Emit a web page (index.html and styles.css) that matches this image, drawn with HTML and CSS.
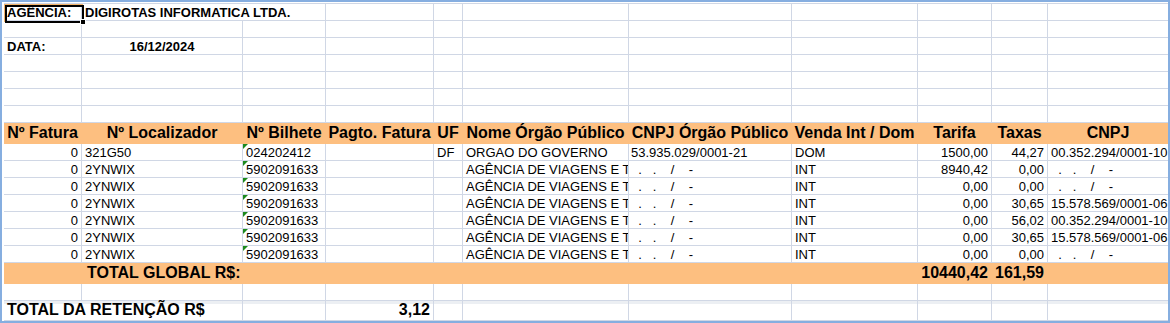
FILE: index.html
```html
<!DOCTYPE html>
<html lang="pt-BR">
<head>
    <meta charset="UTF-8">
    <title>Relatório de Retenção</title>
    <link rel="stylesheet" href="styles.css">
</head>
<body>
<div class="sheet">
    <div class="grid">
        <!-- cabeçalho da agência -->
        <div class="row">
            <div class="cell b pl">AGÊNCIA:</div>
            <div class="cell b span2">DIGIROTAS INFORMATICA LTDA.</div>
            <div class="cell"></div><div class="cell"></div><div class="cell"></div><div class="cell"></div>
            <div class="cell"></div><div class="cell"></div><div class="cell"></div><div class="cell"></div>
        </div>
        <div class="row">
            <div class="cell"></div><div class="cell"></div><div class="cell"></div><div class="cell"></div>
            <div class="cell"></div><div class="cell"></div><div class="cell"></div><div class="cell"></div>
            <div class="cell"></div><div class="cell"></div><div class="cell"></div>
        </div>
        <div class="row">
            <div class="cell b pl">DATA:</div>
            <div class="cell b ctr">16/12/2024</div>
            <div class="cell"></div><div class="cell"></div><div class="cell"></div><div class="cell"></div>
            <div class="cell"></div><div class="cell"></div><div class="cell"></div><div class="cell"></div>
            <div class="cell"></div>
        </div>
        <div class="row">
            <div class="cell"></div><div class="cell"></div><div class="cell"></div><div class="cell"></div>
            <div class="cell"></div><div class="cell"></div><div class="cell"></div><div class="cell"></div>
            <div class="cell"></div><div class="cell"></div><div class="cell"></div>
        </div>
        <div class="row">
            <div class="cell"></div><div class="cell"></div><div class="cell"></div><div class="cell"></div>
            <div class="cell"></div><div class="cell"></div><div class="cell"></div><div class="cell"></div>
            <div class="cell"></div><div class="cell"></div><div class="cell"></div>
        </div>
        <div class="row">
            <div class="cell"></div><div class="cell"></div><div class="cell"></div><div class="cell"></div>
            <div class="cell"></div><div class="cell"></div><div class="cell"></div><div class="cell"></div>
            <div class="cell"></div><div class="cell"></div><div class="cell"></div>
        </div>
        <div class="row">
            <div class="cell"></div><div class="cell"></div><div class="cell"></div><div class="cell"></div>
            <div class="cell"></div><div class="cell"></div><div class="cell"></div><div class="cell"></div>
            <div class="cell"></div><div class="cell"></div><div class="cell"></div>
        </div>

        <!-- títulos das colunas -->
        <div class="row band head">
            <div class="cell ctr">Nº Fatura</div>
            <div class="cell ctr">Nº Localizador</div>
            <div class="cell ctr">Nº Bilhete</div>
            <div class="cell ctr">Pagto. Fatura</div>
            <div class="cell ctr">UF</div>
            <div class="cell ctr">Nome Órgão Público</div>
            <div class="cell ctr">CNPJ Órgão Público</div>
            <div class="cell ctr">Venda Int / Dom</div>
            <div class="cell ctr">Tarifa</div>
            <div class="cell ctr">Taxas</div>
            <div class="cell ctr">CNPJ</div>
        </div>

        <!-- bilhetes -->
        <div class="row">
            <div class="cell r">0</div>
            <div class="cell">321G50</div>
            <div class="cell txt">024202412</div>
            <div class="cell"></div>
            <div class="cell">DF</div>
            <div class="cell">ORGAO DO GOVERNO</div>
            <div class="cell g">53.935.029/0001-21</div>
            <div class="cell">DOM</div>
            <div class="cell r">1500,00</div>
            <div class="cell r">44,27</div>
            <div class="cell">00.352.294/0001-10</div>
        </div>
        <div class="row">
            <div class="cell r">0</div>
            <div class="cell">2YNWIX</div>
            <div class="cell txt">5902091633</div>
            <div class="cell"></div>
            <div class="cell"></div>
            <div class="cell">AGÊNCIA DE VIAGENS E TURISMO</div>
            <div class="cell g">  .   .    /    -</div>
            <div class="cell">INT</div>
            <div class="cell r">8940,42</div>
            <div class="cell r">0,00</div>
            <div class="cell">  .   .    /    -</div>
        </div>
        <div class="row">
            <div class="cell r">0</div>
            <div class="cell">2YNWIX</div>
            <div class="cell txt">5902091633</div>
            <div class="cell"></div>
            <div class="cell"></div>
            <div class="cell">AGÊNCIA DE VIAGENS E TURISMO</div>
            <div class="cell g">  .   .    /    -</div>
            <div class="cell">INT</div>
            <div class="cell r">0,00</div>
            <div class="cell r">0,00</div>
            <div class="cell">  .   .    /    -</div>
        </div>
        <div class="row">
            <div class="cell r">0</div>
            <div class="cell">2YNWIX</div>
            <div class="cell txt">5902091633</div>
            <div class="cell"></div>
            <div class="cell"></div>
            <div class="cell">AGÊNCIA DE VIAGENS E TURISMO</div>
            <div class="cell g">  .   .    /    -</div>
            <div class="cell">INT</div>
            <div class="cell r">0,00</div>
            <div class="cell r">30,65</div>
            <div class="cell">15.578.569/0001-06</div>
        </div>
        <div class="row">
            <div class="cell r">0</div>
            <div class="cell">2YNWIX</div>
            <div class="cell txt">5902091633</div>
            <div class="cell"></div>
            <div class="cell"></div>
            <div class="cell">AGÊNCIA DE VIAGENS E TURISMO</div>
            <div class="cell g">  .   .    /    -</div>
            <div class="cell">INT</div>
            <div class="cell r">0,00</div>
            <div class="cell r">56,02</div>
            <div class="cell">00.352.294/0001-10</div>
        </div>
        <div class="row">
            <div class="cell r">0</div>
            <div class="cell">2YNWIX</div>
            <div class="cell txt">5902091633</div>
            <div class="cell"></div>
            <div class="cell"></div>
            <div class="cell">AGÊNCIA DE VIAGENS E TURISMO</div>
            <div class="cell g">  .   .    /    -</div>
            <div class="cell">INT</div>
            <div class="cell r">0,00</div>
            <div class="cell r">30,65</div>
            <div class="cell">15.578.569/0001-06</div>
        </div>
        <div class="row">
            <div class="cell r">0</div>
            <div class="cell">2YNWIX</div>
            <div class="cell txt">5902091633</div>
            <div class="cell"></div>
            <div class="cell"></div>
            <div class="cell">AGÊNCIA DE VIAGENS E TURISMO</div>
            <div class="cell g">  .   .    /    -</div>
            <div class="cell">INT</div>
            <div class="cell r">0,00</div>
            <div class="cell r">0,00</div>
            <div class="cell">  .   .    /    -</div>
        </div>

        <!-- totais -->
        <div class="row band total">
            <div class="cell"></div>
            <div class="cell total-label">TOTAL GLOBAL R$:</div>
            <div class="cell"></div><div class="cell"></div><div class="cell"></div><div class="cell"></div>
            <div class="cell"></div><div class="cell"></div>
            <div class="cell r">10440,42</div>
            <div class="cell r">161,59</div>
            <div class="cell"></div>
        </div>
        <div class="row">
            <div class="cell"></div><div class="cell"></div><div class="cell"></div><div class="cell"></div>
            <div class="cell"></div><div class="cell"></div><div class="cell"></div><div class="cell"></div>
            <div class="cell"></div><div class="cell"></div><div class="cell"></div>
        </div>
        <div class="row ret">
            <div class="cell span2 pl">TOTAL DA RETENÇÃO R$</div>
            <div class="cell"></div>
            <div class="cell r">3,12</div>
            <div class="cell"></div><div class="cell"></div><div class="cell"></div><div class="cell"></div>
            <div class="cell"></div><div class="cell"></div><div class="cell"></div>
        </div>
    </div>

    <!-- célula ativa A1 -->
    <div class="selection"><span class="handle"></span></div>
</div>
</body>
</html>
```

FILE: styles.css
```css
* {
    box-sizing: border-box;
}
body {
    margin: 0;
    background-color: #fff;
    font-family: "Liberation Sans", Arial, sans-serif;
    font-size: 13px;
    color: #000;
}
.sheet {
    position: relative;
    width: 1170px;
    height: 323px;
    border: 2px solid #86aee0;
    padding: 1px 0 0 2px;
    overflow: hidden;
}
.grid {
    border-top: 1px solid #d0d7e5;
}
.row {
    display: grid;
    grid-template-columns: 78px 161px 83px 108px 29px 166px 163px 126px 74px 56px 120px;
    height: 17px;
}
.cell {
    position: relative;
    display: flex;
    align-items: flex-end;
    padding: 0 3px 1px;
    line-height: 13px;
    white-space: pre;
    overflow: hidden;
    border-right: 1px solid #d0d7e5;
    border-bottom: 1px solid #d0d7e5;
}
.cell:last-child {
    border-right: none;
}
.span2 {
    grid-column: span 2;
}
.b {
    font-weight: bold;
}
.pl {
    padding-left: 3px;
}
.r {
    justify-content: flex-end;
}
.ctr {
    justify-content: center;
}
.g {
    padding-left: 2px;
}

/* número armazenado como texto */
.txt::before {
    content: '';
    position: absolute;
    left: 0;
    top: 0;
    border-top: 5px solid #1d8a1d;
    border-right: 5px solid transparent;
}

/* faixas laranja */
.band {
    height: 21px;
    background-color: #fdbf80;
}
.band .cell {
    border-color: transparent;
    font-size: 16px;
    font-weight: bold;
    line-height: 16px;
    padding-bottom: 2px;
}
.total-label {
    padding-left: 5px;
}
.ret {
    height: 20px;
}
.ret .cell {
    overflow: visible;
    font-size: 16px;
    font-weight: bold;
    line-height: 16px;
    padding-bottom: 2px;
    background: linear-gradient(#eceff3 0, #eceff3 3px, #fff 3px);
}

.selection {
    position: absolute;
    left: 3px;
    top: 3px;
    width: 79px;
    height: 18px;
    border: 2px solid #000;
    box-shadow: -1px -1px 0 #f3b46c;
}
.handle {
    position: absolute;
    right: -4px;
    bottom: -4px;
    width: 6px;
    height: 6px;
    background-color: #000;
    border: 1px solid #fff;
}
```
